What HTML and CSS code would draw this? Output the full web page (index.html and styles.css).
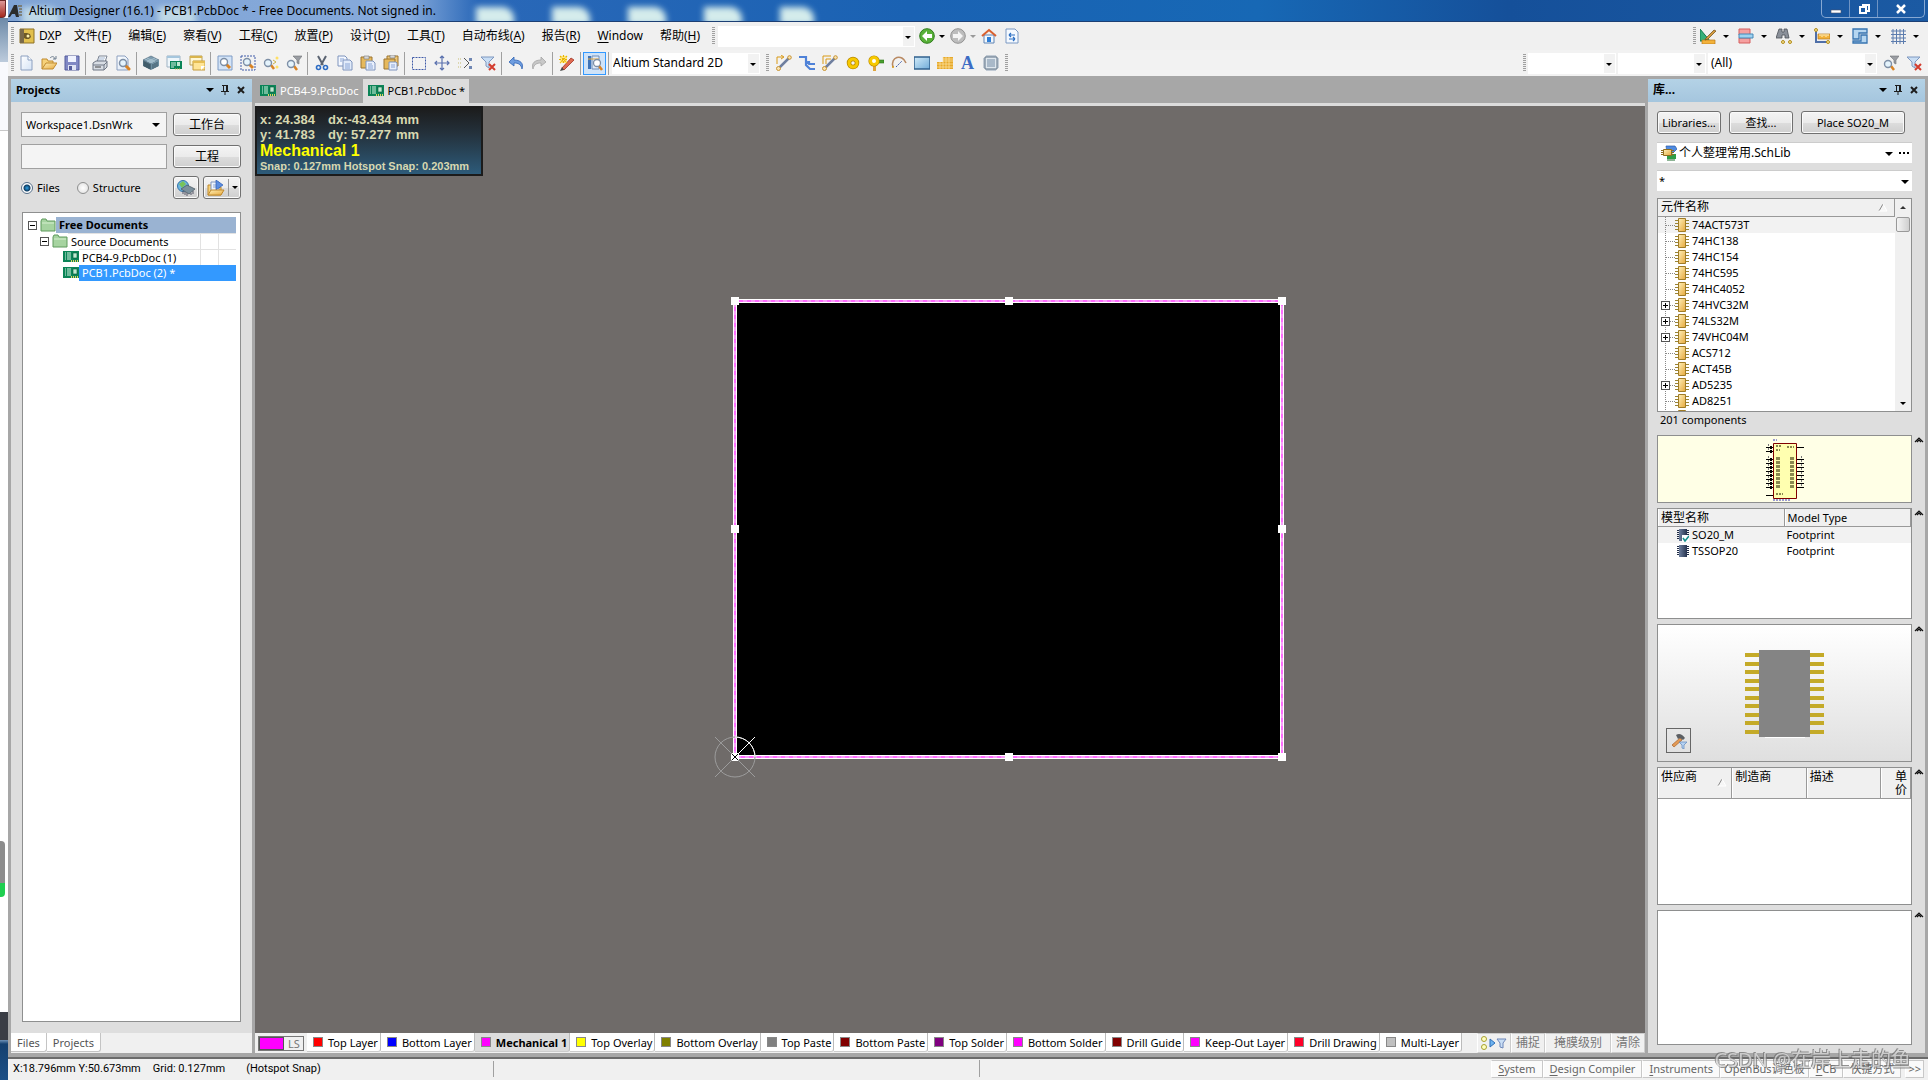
FILE: index.html
```html
<!DOCTYPE html>
<html lang="zh-CN">
<head>
  <meta charset="UTF-8">
  <title>Altium Designer (16.1)</title>
  <link rel="stylesheet" href="styles.css">
</head>
<body>

<!-- icon sprites -->
<svg class="sprites" width="0" height="0">
  <defs>
    <linearGradient id="gGold" x1="0" y1="0" x2="1" y2="1"><stop offset="0" stop-color="#fff0b8"/><stop offset="1" stop-color="#e6a83c"/></linearGradient>
    <linearGradient id="gSky" x1="0" y1="0" x2="1" y2="1"><stop offset="0" stop-color="#d3ecfa"/><stop offset="1" stop-color="#6fabd8"/></linearGradient>
    <linearGradient id="gPaper" x1="0" y1="0" x2="1" y2="1"><stop offset="0" stop-color="#ffffff"/><stop offset="1" stop-color="#d5e3f5"/></linearGradient>
    <linearGradient id="gDark" x1="0" y1="0" x2="1" y2="0"><stop offset="0" stop-color="#6d7f9e"/><stop offset="1" stop-color="#27344f"/></linearGradient>
  </defs>
  <symbol id="i-dxp" viewBox="0 0 16 16">
    <path d="M3 1h12v14H1V1z" fill="#e2c04e" stroke="#8d7124"/><path d="M1 1h4v14H1z" fill="#7a6a4a"/>
    <path d="M5 5h3l3 1 1 3-2 2H7L5 10z" fill="#6e5a26"/><circle cx="9" cy="8" r="1.5" fill="#fff3b0"/>
  </symbol>
  <symbol id="i-new" viewBox="0 0 16 16">
    <path d="M3 1h7l4 4v10H3z" fill="url(#gPaper)" stroke="#8ca0c0"/><path d="M10 1v4h4" fill="#fff" stroke="#8ca0c0"/>
  </symbol>
  <symbol id="i-open" viewBox="0 0 16 16">
    <path d="M1 14V4h5l1 2h5v3" fill="#f6d27a" stroke="#c08a2e"/><path d="M1 14l4-6h11l-4 6z" fill="url(#gGold)" stroke="#c08a2e"/>
    <path d="M9 3c2-2 4-2 5 1M12 4h3V1" fill="none" stroke="#6f7f8f"/>
  </symbol>
  <symbol id="i-save" viewBox="0 0 16 16">
    <path d="M1 1h14v14H1z" fill="#8088c4" stroke="#545c9c"/><path d="M4 1h8v6H4z" fill="#f0f3ff"/><path d="M4 10h8v5H4z" fill="#dfe3f4"/><path d="M5 11h3v4H5z" fill="#545c9c"/>
  </symbol>
  <symbol id="i-print" viewBox="0 0 16 16">
    <path d="M5 7l2-6h8l-2 6z" fill="#fff" stroke="#7c8594"/><path d="M7 3h6M6 5h6" stroke="#9fb3cf"/>
    <path d="M1 8l3-2h11v6l-3 3H1z" fill="#d8dde4" stroke="#6f7784"/><path d="M1 10h11l3-3M12 10v5" fill="none" stroke="#6f7784"/><path d="M3 12h6" stroke="#444"/>
  </symbol>
  <symbol id="i-preview" viewBox="0 0 16 16">
    <path d="M2 1h8l3 3v11H2z" fill="url(#gPaper)" stroke="#8ca0c0"/><path d="M11 11l3 3" stroke="#d98324" stroke-width="3" stroke-linecap="round"/><circle cx="8" cy="8" r="3.5" fill="#e4f3fc" stroke="#7d8fa6" stroke-width="1.5"/>
  </symbol>
  <symbol id="i-layers" viewBox="0 0 16 16">
    <path d="M0 5l8-4 8 4-8 4z" fill="#7d9caf" stroke="#4b6778" stroke-width=".6"/><path d="M4 3l8 4M2 4l8 4M4 7l8-4M6 8l8-4" stroke="#c3dae4" stroke-width=".6"/>
    <path d="M0 5v6l8 4V9z" fill="#4e6a7a"/><path d="M16 5v6l-8 4V9z" fill="#6d90a3"/><path d="M2 7v5M4 8v5M6 9v5M10 9v5M12 8v5M14 7v5" stroke="#2f4652" stroke-width=".7"/>
  </symbol>
  <symbol id="i-pcb" viewBox="0 0 16 16">
    <path d="M0 2h16v11H0z" fill="#0b8457"/><path d="M2 4h1M2 6h1M2 8h1M2 10h1M4 4h4M4 6h4M4 8h4M4 10h4" stroke="#d6f3e2"/>
    <path d="M10 4h4v5h-4z" fill="#bfe9d1" stroke="#045c3a" stroke-width=".6"/><path d="M8 12h7" stroke="#e0cf62" stroke-width="2" stroke-dasharray="1 1"/>
  </symbol>
  <symbol id="i-pcbwin" viewBox="0 0 16 16">
    <path d="M1 1h13v11H1z" fill="#eef6fb" stroke="#9fb3c4"/><path d="M1 1h13v2H1z" fill="#a5c6dd"/>
    <path d="M4 6h12v8H4z" fill="#0b8457"/><path d="M5 8h5M5 10h5M5 12h3" stroke="#d6f3e2"/><path d="M11 7h3v4h-3z" fill="#bfe9d1"/><path d="M9 14h6" stroke="#d9c24b" stroke-dasharray="1 1"/>
  </symbol>
  <symbol id="i-sheets" viewBox="0 0 16 16">
    <path d="M1 1h12v9H1z" fill="#fff7d4" stroke="#b9a05a"/><path d="M1 1h12v2H1z" fill="#d9b44c"/><path d="M4 6h12v9H4z" fill="#ffe596" stroke="#c39a3a"/><path d="M4 6h12v2H4z" fill="#e5bd52"/><path d="M12 15l4-4h-4z" fill="#fff"/>
  </symbol>
  <symbol id="i-zdoc" viewBox="0 0 16 16">
    <path d="M1 1h14v14H1z" fill="#d4e4f7" stroke="#7e9cc6"/><path d="M9 9l4 4" stroke="#d98324" stroke-width="3"/><circle cx="7" cy="7" r="3.5" fill="#fff" stroke="#7d8fa6" stroke-width="1.4"/>
  </symbol>
  <symbol id="i-zarea" viewBox="0 0 16 16">
    <path d="M1 1h14v14H1z" fill="none" stroke="#3f5aa8" stroke-dasharray="2 1"/><path d="M9 9l4 4" stroke="#d98324" stroke-width="3"/><circle cx="7" cy="7" r="3.5" fill="#e4f3fc" stroke="#7d8fa6" stroke-width="1.4"/>
  </symbol>
  <symbol id="i-zsel" viewBox="0 0 16 16">
    <path d="M8 10l3 4" stroke="#d98324" stroke-width="2.5"/><circle cx="5" cy="8" r="3.5" fill="#e4f3fc" stroke="#7d8fa6" stroke-width="1.4"/>
    <circle cx="14" cy="3" r="1.5" fill="#ffe066"/><circle cx="14" cy="12" r="1.5" fill="#ffe066"/><path d="M10 5l3 2-3 2" fill="none" stroke="#cbb34a"/>
  </symbol>
  <symbol id="i-zfilter" viewBox="0 0 16 16">
    <path d="M7 1h9l-3 4v4l-2-1V5z" fill="#9a9da3" stroke="#6f7276" stroke-width=".6"/><path d="M8 11l3 4" stroke="#d98324" stroke-width="2.5"/><circle cx="5" cy="9" r="3.5" fill="#e4f3fc" stroke="#7d8fa6" stroke-width="1.4"/>
  </symbol>
  <symbol id="i-cut" viewBox="0 0 16 16">
    <path d="M4 1l5 9M12 1L7 10" stroke="#5b6472" stroke-width="2"/><circle cx="4.500" cy="12.500" r="2" fill="none" stroke="#2c6cc4" stroke-width="1.600"/><circle cx="11.500" cy="12.500" r="2" fill="none" stroke="#2c6cc4" stroke-width="1.600"/>
  </symbol>
  <symbol id="i-copy" viewBox="0 0 16 16">
    <path d="M1 1h7l2 2v8H1z" fill="#f4f8ff" stroke="#7e94bd"/><path d="M6 5h7l2 2v8H6z" fill="#e1ebfa" stroke="#7e94bd"/><path d="M3 4h4M3 6h2M8 9h5M8 11h5M8 13h5" stroke="#8aa5d6"/>
  </symbol>
  <symbol id="i-paste" viewBox="0 0 16 16">
    <path d="M1 2h11v11H1z" fill="#e6b95c" stroke="#9c7430"/><path d="M4 1h5v3H4z" fill="#d8d8d8" stroke="#777" stroke-width=".6"/><path d="M6 6h7l2 2v7H6z" fill="#e9f0fc" stroke="#7e94bd"/><path d="M8 9h4M8 11h5M8 13h5" stroke="#8aa5d6"/>
  </symbol>
  <symbol id="i-paste2" viewBox="0 0 16 16">
    <path d="M4 1h11v10H4z" fill="#efc877" stroke="#9c7430"/><path d="M1 4h11v10H1z" fill="#e6b95c" stroke="#9c7430"/><path d="M7 0h5v3H7z" fill="#d8d8d8" stroke="#777" stroke-width=".6"/><path d="M6 7h7l1 1v7H6z" fill="#e9f0fc" stroke="#7e94bd"/><path d="M8 10h4M8 12h4" stroke="#8aa5d6"/>
  </symbol>
  <symbol id="i-marquee" viewBox="0 0 16 16"><path d="M1.500 2.500h13v12h-13z" fill="none" stroke="#3f5aa8" stroke-dasharray="2 1"/></symbol>
  <symbol id="i-move" viewBox="0 0 16 16"><path d="M8 1v14M1 8h14M6 3l2-2 2 2M6 13l2 2 2-2M3 6L1 8l2 2M13 6l2 2-2 2" fill="none" stroke="#5a71ae" stroke-width="1.2"/></symbol>
  <symbol id="i-desel" viewBox="0 0 16 16"><path d="M7 3l5 5-5 5" fill="none" stroke="#555"/><path d="M1 4h4M1 8h4M1 12h4" stroke="#c5ba6e" stroke-dasharray="1 1"/><path d="M12 3h3v3h-3zM12 11h3v3h-3z" fill="#6f86b3"/></symbol>
  <symbol id="i-clear" viewBox="0 0 16 16"><path d="M1 2h13L9 7v6l-3-2V7z" fill="#c9def5" stroke="#7f98c0"/><path d="M9 9l6 6M15 9l-6 6" stroke="#d33c2e" stroke-width="2"/></symbol>
  <symbol id="i-undo" viewBox="0 0 16 16"><path d="M6 2L1 7l5 4V8c4 0 7 1 8 6 2-6-2-9-8-9z" fill="#6e9de0" stroke="#2f62b3" stroke-width=".8"/></symbol>
  <symbol id="i-redo" viewBox="0 0 16 16"><path d="M10 2l5 5-5 4V8c-4 0-7 1-8 6-2-6 2-9 8-9z" fill="#c8c8c8" stroke="#a3a3a3" stroke-width=".8"/></symbol>
  <symbol id="i-wand" viewBox="0 0 16 16"><path d="M3 13L12 3l3 2L5 15z" fill="#e06a52" stroke="#9f3524" stroke-width=".8"/><path d="M1 16l2-4 2 3z" fill="#444"/><path d="M1 1h7v7H1z" fill="#ffe98a"/><path d="M4.500 0v9M0 4.500h9M1 1l7 7M8 1L1 8" stroke="#e8b400" stroke-width="1.200" stroke-dasharray="2 1"/></symbol>
  <symbol id="i-browse" viewBox="0 0 16 16"><path d="M1 1h3v13H1z" fill="#3f74b8"/><path d="M5 1h7v13H5z" fill="#dfeaf7" stroke="#6e8db8"/><path d="M1 4h11" stroke="#e7a93b"/><path d="M12 11l3 4" stroke="#d98324" stroke-width="2.500"/><circle cx="10" cy="8" r="3.500" fill="#fff" stroke="#7d8fa6" stroke-width="1.300"/></symbol>
  <symbol id="i-route" viewBox="0 0 16 16"><path d="M3 13L13 3" stroke="#6f7f9f" stroke-width="2.500"/><circle cx="2.500" cy="13.500" r="2" fill="#f7e3b5" stroke="#c89330"/><circle cx="13.500" cy="2.500" r="1.800" fill="#f7e3b5" stroke="#c89330"/><path d="M1 9V2h6M5 0l3 2-3 2" fill="none" stroke="#d99a16"/></symbol>
  <symbol id="i-diff" viewBox="0 0 16 16"><path d="M0 2h7v4l3 3h6M7 6v4l4 4h5M10 6v3" fill="none" stroke="#4f82d8" stroke-width="2.200"/></symbol>
  <symbol id="i-multi" viewBox="0 0 16 16"><path d="M3 13L13 3" stroke="#6f7f9f" stroke-width="2.500"/><circle cx="2.500" cy="13.500" r="2" fill="#f7e3b5" stroke="#c89330"/><circle cx="13.500" cy="2.500" r="1.800" fill="#f7e3b5" stroke="#c89330"/><path d="M1 9V1h8M4 9V4h5" fill="none" stroke="#d99a16"/></symbol>
  <symbol id="i-pad" viewBox="0 0 16 16"><circle cx="8" cy="8" r="4" fill="none" stroke="#b98a00" stroke-width="4.500"/><circle cx="8" cy="8" r="4" fill="none" stroke="#f7c900" stroke-width="3"/></symbol>
  <symbol id="i-via" viewBox="0 0 16 16"><path d="M8 5h8v3H8z" fill="#49a02f" stroke="#2f7418" stroke-width=".6"/><path d="M5 8h3v8H5z" fill="#e0a53c"/><circle cx="6" cy="6" r="3.500" fill="none" stroke="#b98a00" stroke-width="4.200"/><circle cx="6" cy="6" r="3.500" fill="#fff" stroke="#f7c900" stroke-width="3"/></symbol>
  <symbol id="i-arc" viewBox="0 0 16 16"><path d="M2 12C-1 2 11-2 15 8" fill="none" stroke="#b98a63" stroke-width="1.600"/><path d="M5 12l6-6" stroke="#3f5aa8" stroke-dasharray="2 1"/><circle cx="2" cy="12" r="1" fill="#d99a16"/></symbol>
  <symbol id="i-fill" viewBox="0 0 16 16"><path d="M0 2h16v12H0z" fill="url(#gSky)" stroke="#31618f" stroke-width="1.500"/></symbol>
  <symbol id="i-poly" viewBox="0 0 16 16"><path d="M6 2h10v12H0V7h6z" fill="#e6a92c"/><path d="M0 9h16M0 12h16M6 6h10M6 4h10M3 7v7M6 2v12M9 2v12M12 2v12" stroke="#ffe7a6" stroke-width=".7"/></symbol>
  <symbol id="i-chip" viewBox="0 0 16 16"><path d="M4 0v16M6 0v16M8 0v16M10 0v16M12 0v16M0 4h16M0 6h16M0 8h16M0 10h16M0 12h16" stroke="#7890a8" stroke-width=".8"/><path d="M2 2h12v12H2z" fill="#dfe7ee" stroke="#5f7286"/><path d="M4 4h8v8H4z" fill="#a9b9c9"/></symbol>
  <symbol id="i-back" viewBox="0 0 16 16"><circle cx="8" cy="8" r="7.300" fill="#58b038" stroke="#2f7d1c"/><path d="M8 3L3 8l5 5v-3h5V6H8z" fill="#fff"/></symbol>
  <symbol id="i-fwd" viewBox="0 0 16 16"><circle cx="8" cy="8" r="7.300" fill="#bdbdbd" stroke="#929292"/><path d="M8 3l5 5-5 5v-3H3V6h5z" fill="#f5f5f5"/></symbol>
  <symbol id="i-home" viewBox="0 0 16 16"><path d="M3 7h10v8H3z" fill="#f2f7fc" stroke="#5f84b5"/><path d="M6 9h4v5H6z" fill="#2f7ed6"/><path d="M1 8l7-6 7 6" fill="none" stroke="#d9602f" stroke-width="2"/></symbol>
  <symbol id="i-sync" viewBox="0 0 16 16"><path d="M2 1h9l3 3v11H2z" fill="#f4f9ff" stroke="#7a98c2"/><path d="M5 7h6M5 7l2-2M5 7l2 2M11 11H5M11 11L9 9M11 11l-2 2" stroke="#2a6fc4" stroke-width="1.200" fill="none"/></symbol>
  <symbol id="i-ruler" viewBox="0 0 16 16"><path d="M0 1v12h10z" fill="#35b07a" stroke="#0f7a4e"/><path d="M2 12h13v4H2z" fill="#f3b23a" stroke="#b97a1c" stroke-width=".7"/><path d="M6 10l8-8 2 1-8 8-3 1z" fill="#d39a3f" stroke="#6d4a16" stroke-width=".7"/></symbol>
  <symbol id="i-align" viewBox="0 0 16 16"><path d="M1 1h11v6H1zM1 10h11v5H1z" fill="#f6a0a0" stroke="#d45e5e"/><path d="M1 6h14v4H1z" fill="#9fd2f0" stroke="#4789b8"/></symbol>
  <symbol id="i-bino" viewBox="0 0 16 16"><path d="M3 1h3v3h2V1h3l2 9H9V7H6v3H0z" fill="#8a9099" stroke="#4d5259" stroke-width=".8"/><circle cx="7" cy="14" r="1.500" fill="#f7e08a" stroke="#b08b1d"/><circle cx="14" cy="14" r="1.500" fill="#f7e08a" stroke="#b08b1d"/></symbol>
  <symbol id="i-dim" viewBox="0 0 16 16"><path d="M2 3v11h12" fill="none" stroke="#4f6fa8" stroke-width="2"/><path d="M4 6h12v5H4z" fill="#f3b23a" stroke="#b97a1c" stroke-width=".7"/><path d="M6 6v2M8 6v3M10 6v2M12 6v3M14 6v2" stroke="#fff3c9"/><circle cx="2" cy="2" r="1.500" fill="#f7e08a" stroke="#b08b1d"/><circle cx="14" cy="14" r="1.500" fill="#f7e08a" stroke="#b08b1d"/></symbol>
  <symbol id="i-room" viewBox="0 0 16 16"><path d="M1 1h14v4H7v6H1zM15 7v8H1v-2h8V7z" fill="#b6d6f0" stroke="#3673b0" stroke-width="1.300"/></symbol>
  <symbol id="i-grid" viewBox="0 0 16 16"><path d="M3 1v15M6.500 1v15M10 1v15M13.500 1v15M1 3h15M1 6.500h15M1 10h15M1 13.500h15" stroke="#5c7cae"/></symbol>
  <symbol id="i-pin" viewBox="0 0 10 12"><path d="M2 1.500h6M3.500 1v6M6.500 1v6M7.500 1v6M1 7.500h8M5 7v4" stroke="#1d1d1d" fill="none"/></symbol>
  <symbol id="i-x" viewBox="0 0 10 12"><path d="M2 3l6 6M8 3L2 9" stroke="#1d1d1d" stroke-width="2"/></symbol>
  <symbol id="i-sort" viewBox="0 0 10 8"><path d="M5 0l4 7H1z" fill="#f6f6f6"/><path d="M5 0L1 7" stroke="#888"/><path d="M5 0l4 7H1" fill="none" stroke="#fff"/></symbol>
  <symbol id="i-folder" viewBox="0 0 16 14"><path d="M1 3l1-2h4l1 2h8v10H1z" fill="#a6d3a0" stroke="#5e9a5c"/><path d="M2 5h12" stroke="#d5efcf"/></symbol>
  <symbol id="i-comp" viewBox="0 0 14 16"><path d="M0 3.500h14M0 6.500h14M0 9.500h14M0 12.500h14" stroke="#9a8434"/><path d="M3.500 1.500h7v13h-7z" fill="url(#gGold)" stroke="#a07c26"/></symbol>
  <symbol id="i-foot" viewBox="0 0 12 14"><path d="M0 2.500h12M0 4.500h12M0 6.500h12M0 8.500h12M0 10.500h12" stroke="#1f2b45"/><path d="M2 1h8v12H2z" fill="url(#gDark)"/></symbol>
  <symbol id="i-caret" viewBox="0 0 10 6"><path d="M1 5l4-4 4 4M3 5l2-2 2 2" fill="none" stroke="#111" stroke-width="1.200"/></symbol>
  <symbol id="i-globe" viewBox="0 0 18 16"><circle cx="6" cy="6" r="5.500" fill="#6db4e0" stroke="#3474a8"/><path d="M2 4l4-3 3 3-4 4z" fill="#77c35a"/><path d="M4 9l6-4 8 4-6 5z" fill="#7b909d" stroke="#45545d" stroke-width=".7"/><path d="M6 11v3M8 12v3M10 13v3M14 13v2M16 11v3" stroke="#556"/></symbol>
  <symbol id="i-openprj" viewBox="0 0 18 16"><path d="M1 15V5h4l1 2h8v8z" fill="#f6d27a" stroke="#c08a2e"/><path d="M4 2h8v9H4z" fill="#eef4fd" stroke="#7e94bd"/><path d="M6 5h4M6 7h4" stroke="#8aa5d6"/><path d="M9 0l7 5-7 5z" fill="#5b8de0" stroke="#2c5cb3" stroke-width=".7"/><path d="M1 15l3-5h13l-3 5z" fill="url(#gGold)" stroke="#c08a2e"/></symbol>
  <symbol id="i-lib" viewBox="0 0 16 16"><path d="M5 1h9l2 3-4 4H6z" fill="#4f8ae0" stroke="#2a5aa8" stroke-width=".7"/><path d="M6 9h9v5H6z" fill="#2f9e46"/><path d="M7 14v2M9 14v2M11 14v2M13 14v2" stroke="#1c6a2c"/><path d="M0 5.500h13M0 7.500h13M0 9.500h13" stroke="#8f6d1f"/><path d="M2.500 4.500h8v6h-8z" fill="url(#gGold)" stroke="#8f6d1f"/></symbol>
  <symbol id="i-hammer" viewBox="0 0 16 16"><path d="M1 12L9 5l2 2-8 7z" fill="#e39a56" stroke="#a8632a" stroke-width=".7"/><path d="M5 2c3-2 6-1 9 3l-2 2-3-2-2 1z" fill="#5c5f63"/><path d="M8 9h8l-3 3v4l-2-1v-3z" fill="#b5d2f2" stroke="#5f86ba" stroke-width=".7"/></symbol>
</svg>

<div class="screen">
  <!-- slice of the desktop behind the window -->
  <div class="desktop-edge">
    <i class="edge-red"></i><i class="edge-glass"></i><i class="edge-top"></i><i class="edge-page"></i><i class="edge-green"></i><i class="edge-page2"></i><i class="edge-dark"></i><i class="edge-task"></i>
  </div>

  <div class="window">
    <header class="titlebar">
      <i class="blob b1"></i><i class="blob b2"></i><i class="blob b3"></i><i class="blob b4"></i><i class="blob b5"></i><i class="blob b6"></i><i class="blob b7"></i>
      <svg class="logo" viewBox="0 0 16 16"><path d="M0 14L6 2h3l2 12H8l-1-3H4l-2 3z" fill="#2b2b2b"/><path d="M10 3h4M11 6h3M11 9h3M11 12h3" stroke="#77705a" stroke-width="1.500"/></svg>
      <h1>Altium Designer (16.1) - PCB1.PcbDoc * - Free Documents. Not signed in.</h1>
      <div class="win-buttons">
        <button aria-label="Minimize"><svg width="12" height="12" viewBox="0 0 12 12"><path d="M1 7h10v3H1z" fill="#fff" stroke="#47526b" stroke-width=".6"/></svg></button>
        <button aria-label="Restore"><svg width="12" height="12" viewBox="0 0 12 12"><path d="M4 2h7v6H9M2 4h6v6H2z" fill="none" stroke="#fff" stroke-width="2"/></svg></button>
        <button class="wide" aria-label="Close"><svg width="12" height="12" viewBox="0 0 12 12"><path d="M2 2l8 8M10 2l-8 8" stroke="#fff" stroke-width="2.500"/></svg></button>
      </div>
    </header>

    <nav class="menubar">
      <i class="grip"></i>
      <a class="menu dxp" href="#"><svg class="ic"><use href="#i-dxp"/></svg><span>D<u>X</u>P</span></a>
      <a class="menu" href="#">文件(<u>F</u>)</a>
      <a class="menu" href="#">编辑(<u>E</u>)</a>
      <a class="menu" href="#">察看(<u>V</u>)</a>
      <a class="menu" href="#">工程(<u>C</u>)</a>
      <a class="menu" href="#">放置(<u>P</u>)</a>
      <a class="menu" href="#">设计(<u>D</u>)</a>
      <a class="menu" href="#">工具(<u>T</u>)</a>
      <a class="menu" href="#">自动布线(<u>A</u>)</a>
      <a class="menu" href="#">报告(<u>R</u>)</a>
      <a class="menu" href="#"><u>W</u>indow</a>
      <a class="menu" href="#">帮助(<u>H</u>)</a>
      <i class="grip"></i>
      <span class="drop w-address"><select aria-label="Address"><option></option></select></span>
      <button class="tool" aria-label="Back"><svg class="ic"><use href="#i-back"/></svg></button><i class="arr"></i>
      <button class="tool" aria-label="Forward"><svg class="ic"><use href="#i-fwd"/></svg></button><i class="arr dim"></i>
      <button class="tool" aria-label="Home"><svg class="ic"><use href="#i-home"/></svg></button>
      <button class="tool" aria-label="Refresh"><svg class="ic"><use href="#i-sync"/></svg></button>
      <div class="right utilities">
        <i class="grip"></i>
        <button class="tool" aria-label="Utilities"><svg class="ic"><use href="#i-ruler"/></svg></button><i class="arr"></i>
        <button class="tool" aria-label="Align"><svg class="ic"><use href="#i-align"/></svg></button><i class="arr"></i>
        <button class="tool" aria-label="Find"><svg class="ic"><use href="#i-bino"/></svg></button><i class="arr"></i>
        <button class="tool" aria-label="Dimension"><svg class="ic"><use href="#i-dim"/></svg></button><i class="arr"></i>
        <button class="tool" aria-label="Room"><svg class="ic"><use href="#i-room"/></svg></button><i class="arr"></i>
        <button class="tool" aria-label="Grid"><svg class="ic"><use href="#i-grid"/></svg></button><i class="arr"></i>
      </div>
    </nav>

    <div class="toolbar">
      <i class="grip"></i>
      <button class="tool" aria-label="New"><svg class="ic"><use href="#i-new"/></svg></button>
      <button class="tool" aria-label="Open"><svg class="ic"><use href="#i-open"/></svg></button>
      <button class="tool" aria-label="Save"><svg class="ic"><use href="#i-save"/></svg></button>
      <i class="sep"></i>
      <button class="tool" aria-label="Print"><svg class="ic"><use href="#i-print"/></svg></button>
      <button class="tool" aria-label="Print preview"><svg class="ic"><use href="#i-preview"/></svg></button>
      <i class="sep"></i>
      <button class="tool" aria-label="Layers"><svg class="ic"><use href="#i-layers"/></svg></button>
      <button class="tool" aria-label="PCB panel"><svg class="ic"><use href="#i-pcbwin"/></svg></button>
      <button class="tool" aria-label="Sheets"><svg class="ic"><use href="#i-sheets"/></svg></button>
      <i class="sep"></i>
      <button class="tool" aria-label="Fit document"><svg class="ic"><use href="#i-zdoc"/></svg></button>
      <button class="tool" aria-label="Zoom area"><svg class="ic"><use href="#i-zarea"/></svg></button>
      <button class="tool" aria-label="Zoom selected"><svg class="ic"><use href="#i-zsel"/></svg></button>
      <button class="tool" aria-label="Zoom filtered"><svg class="ic"><use href="#i-zfilter"/></svg></button>
      <i class="sep"></i>
      <button class="tool" aria-label="Cut"><svg class="ic"><use href="#i-cut"/></svg></button>
      <button class="tool" aria-label="Copy"><svg class="ic"><use href="#i-copy"/></svg></button>
      <button class="tool" aria-label="Paste"><svg class="ic"><use href="#i-paste"/></svg></button>
      <button class="tool" aria-label="Rubber stamp"><svg class="ic"><use href="#i-paste2"/></svg></button>
      <i class="sep"></i>
      <button class="tool" aria-label="Select area"><svg class="ic"><use href="#i-marquee"/></svg></button>
      <button class="tool" aria-label="Move"><svg class="ic"><use href="#i-move"/></svg></button>
      <button class="tool" aria-label="Deselect"><svg class="ic"><use href="#i-desel"/></svg></button>
      <button class="tool" aria-label="Clear filter"><svg class="ic"><use href="#i-clear"/></svg></button>
      <i class="sep"></i>
      <button class="tool" aria-label="Undo"><svg class="ic"><use href="#i-undo"/></svg></button>
      <button class="tool" aria-label="Redo"><svg class="ic"><use href="#i-redo"/></svg></button>
      <i class="sep"></i>
      <button class="tool" aria-label="Cross probe"><svg class="ic"><use href="#i-wand"/></svg></button>
      <i class="sep"></i>
      <button class="tool on" aria-label="Browse"><svg class="ic"><use href="#i-browse"/></svg></button>
      <i class="sep"></i>
      <span class="drop w-view"><select aria-label="View"><option>Altium Standard 2D</option></select></span>
      <i class="grip"></i>
      <button class="tool" aria-label="Route"><svg class="ic"><use href="#i-route"/></svg></button>
      <button class="tool" aria-label="Differential pair"><svg class="ic"><use href="#i-diff"/></svg></button>
      <button class="tool" aria-label="Multiple traces"><svg class="ic"><use href="#i-multi"/></svg></button>
      <button class="tool" aria-label="Pad"><svg class="ic"><use href="#i-pad"/></svg></button>
      <button class="tool" aria-label="Via"><svg class="ic"><use href="#i-via"/></svg></button>
      <button class="tool" aria-label="Arc"><svg class="ic"><use href="#i-arc"/></svg></button>
      <button class="tool" aria-label="Fill"><svg class="ic"><use href="#i-fill"/></svg></button>
      <button class="tool" aria-label="Polygon"><svg class="ic"><use href="#i-poly"/></svg></button>
      <button class="tool letter">A</button>
      <button class="tool" aria-label="Component"><svg class="ic"><use href="#i-chip"/></svg></button>
      <i class="grip"></i>
      <div class="right filters">
        <i class="grip"></i>
        <span class="drop w-net"><select aria-label="Net"><option></option></select></span>
        <span class="drop w-net"><select aria-label="Component"><option></option></select></span>
        <span class="drop w-all"><select aria-label="Filter"><option>(All)</option></select></span>
        <div class="pair">
          <button class="tool" aria-label="Zoom filtered"><svg class="ic"><use href="#i-zfilter"/></svg></button>
          <button class="tool" aria-label="Clear filter"><svg class="ic"><use href="#i-clear"/></svg></button>
        </div>
      </div>
    </div>

    <main class="work">
      <aside class="panel projects">
        <div class="panel-head"><h2>Projects</h2><i class="arr"></i><svg class="ph"><use href="#i-pin"/></svg><svg class="ph"><use href="#i-x"/></svg></div>
        <div class="proj-form">
          <span class="drop boxed"><select aria-label="Workspace"><option>Workspace1.DsnWrk</option></select></span>
          <button class="btn">工作台</button>
          <input class="boxed" type="text" aria-label="Project">
          <button class="btn">工程</button>
          <div class="radios">
            <label><input type="radio" name="view" checked>Files</label>
            <label><input type="radio" name="view">Structure</label>
          </div>
          <div class="mini">
            <button class="btn" aria-label="Compile"><svg width="18" height="16"><use href="#i-globe"/></svg></button>
            <button class="btn split" aria-label="Open project"><svg width="18" height="16"><use href="#i-openprj"/></svg><i class="bar"></i><i class="arr"></i></button>
          </div>
        </div>
        <ul class="tree">
          <li class="root"><i class="pm minus"></i><svg width="16" height="14"><use href="#i-folder"/></svg><span>Free Documents</span></li>
          <li class="lv1 cells"><i class="pm minus"></i><svg width="16" height="14"><use href="#i-folder"/></svg><span>Source Documents</span></li>
          <li class="lv2 cells"><svg width="16" height="16"><use href="#i-pcb"/></svg><span>PCB4-9.PcbDoc (1)</span></li>
          <li class="lv2 active"><svg width="16" height="16"><use href="#i-pcb"/></svg><span>PCB1.PcbDoc (2) *</span></li>
        </ul>
        <div class="panel-tabs"><a href="#">Files</a><a href="#">Projects</a></div>
      </aside>

      <section class="editor">
        <div class="doc-tabs">
          <a href="#"><svg width="16" height="16"><use href="#i-pcb"/></svg>PCB4-9.PcbDoc</a>
          <a href="#" class="current"><svg width="16" height="16"><use href="#i-pcb"/></svg>PCB1.PcbDoc *</a>
        </div>
        <div class="canvas">
          <div class="hud">
            <p><span>x: 24.384</span><span>dx:-43.434</span>mm</p>
            <p><span>y: 41.783</span><span>dy: 57.277</span>mm</p>
            <p class="layer">Mechanical 1</p>
            <p class="snap">Snap: 0.127mm Hotspot Snap: 0.203mm</p>
          </div>
          <svg class="board" width="580" height="500" viewBox="0 0 580 500">
            <path d="M24 14h547v456H24z" fill="#000" stroke="#fff" stroke-width="4"/>
            <path d="M24 14h547v456H24z" fill="none" stroke="#ff6cff" stroke-width="2"/>
            <path d="M24 14h547v456H24z" fill="none" stroke="#f3d4f3" stroke-width="1" stroke-dasharray="4 4"/>
            <path d="M20 10h8v8h-8zM294 10h8v8h-8zM567 10h8v8h-8zM20 238h8v8h-8zM567 238h8v8h-8zM20 466h8v8h-8zM294 466h8v8h-8zM567 466h8v8h-8z" fill="#fff"/>
            <path d="M4 450l40 40M4 490l20-20" stroke="#9c9c9c"/>
            <circle cx="24" cy="470" r="20" fill="none" stroke="#9c9c9c"/>
            <path d="M24 450a20 20 0 0 1 20 20M24 470l20-20" fill="none" stroke="#fff"/>
            <path d="M21 467l6 6M27 467l-6 6" stroke="#000"/>
          </svg>
        </div>
        <div class="layer-tabs">
          <button class="ls"><i></i>LS</button>
          <a href="#"><i class="c-red"></i>Top Layer</a>
          <a href="#"><i class="c-blue"></i>Bottom Layer</a>
          <a href="#" class="current"><i class="c-magenta"></i>Mechanical 1</a>
          <a href="#"><i class="c-yellow"></i>Top Overlay</a>
          <a href="#"><i class="c-olive"></i>Bottom Overlay</a>
          <a href="#"><i class="c-gray"></i>Top Paste</a>
          <a href="#"><i class="c-maroon"></i>Bottom Paste</a>
          <a href="#"><i class="c-purple"></i>Top Solder</a>
          <a href="#"><i class="c-magenta"></i>Bottom Solder</a>
          <a href="#"><i class="c-maroon"></i>Drill Guide</a>
          <a href="#"><i class="c-magenta"></i>Keep-Out Layer</a>
          <a href="#"><i class="c-crimson"></i>Drill Drawing</a>
          <a href="#"><i class="c-silver"></i>Multi-Layer</a>
          <div class="mask">
            <button aria-label="Highlight"><svg width="28" height="16" viewBox="0 0 28 16"><circle cx="4" cy="4" r="2.500" fill="#ffffc0" stroke="#a8a030"/><circle cx="4" cy="12" r="2.500" fill="#ffffc0" stroke="#a8a030"/><path d="M10 4l5 4-5 4z" fill="#6fb4f0" stroke="#2f6fb8"/><path d="M17 4h9l-3 4v5l-3-1V8z" fill="#c9def5" stroke="#6d86b8"/></svg></button>
            <button>捕捉</button><button class="roomy">掩膜级别</button><button>清除</button>
          </div>
        </div>
      </section>

      <aside class="panel library">
        <div class="panel-head"><h2>库...</h2><i class="arr"></i><svg class="ph"><use href="#i-pin"/></svg><svg class="ph"><use href="#i-x"/></svg></div>
        <div class="lib-body">
          <div class="lib-buttons"><button class="btn">Libraries...</button><button class="btn">查找...</button><button class="btn place">Place SO20_M</button></div>
          <div class="lib-row"><svg width="16" height="16"><use href="#i-lib"/></svg><span class="drop"><select aria-label="Library"><option>个人整理常用.SchLib</option></select></span><button class="dots" aria-label="More"><i></i><i></i><i></i></button></div>
          <div class="lib-row"><span class="drop"><select aria-label="Mask"><option>*</option></select></span></div>

          <div class="comp-list">
            <div class="list-main">
              <div class="list-head">元件名称<svg class="sort"><use href="#i-sort"/></svg></div>
              <ul>
                <li class="hot"><svg width="14" height="16"><use href="#i-comp"/></svg>74ACT573T</li>
                <li><svg width="14" height="16"><use href="#i-comp"/></svg>74HC138</li>
                <li><svg width="14" height="16"><use href="#i-comp"/></svg>74HC154</li>
                <li><svg width="14" height="16"><use href="#i-comp"/></svg>74HC595</li>
                <li><svg width="14" height="16"><use href="#i-comp"/></svg>74HC4052</li>
                <li><i class="pm plus"></i><svg width="14" height="16"><use href="#i-comp"/></svg>74HVC32M</li>
                <li><i class="pm plus"></i><svg width="14" height="16"><use href="#i-comp"/></svg>74LS32M</li>
                <li><i class="pm plus"></i><svg width="14" height="16"><use href="#i-comp"/></svg>74VHC04M</li>
                <li><svg width="14" height="16"><use href="#i-comp"/></svg>ACS712</li>
                <li><svg width="14" height="16"><use href="#i-comp"/></svg>ACT45B</li>
                <li><i class="pm plus"></i><svg width="14" height="16"><use href="#i-comp"/></svg>AD5235</li>
                <li><svg width="14" height="16"><use href="#i-comp"/></svg>AD8251</li>
                <li><svg width="14" height="16"><use href="#i-comp"/></svg></li>
              </ul>
            </div>
            <div class="scroll"><i class="arr up"></i><i class="thumb"></i><i class="arr"></i></div>
          </div>
          <p class="count">201 components</p>

          <div class="fold symbol">
            <svg width="40" height="66" viewBox="0 0 40 66">
              <path d="M8.500 7.500h23v55h-23z" fill="#ffffb0" stroke="#800000"/>
              <path d="M1 11.500h7M1 15.500h7M1 23.500h7M1 27.500h7M1 31.500h7M1 35.500h7M1 39.500h7M1 43.500h7M1 47.500h7M1 51.500h7M1 59.500h7M32 11.500h7M32 23.500h7M32 27.500h7M32 31.500h7M32 35.500h7M32 39.500h7M32 43.500h7M32 47.500h7M32 51.500h7" stroke="#000"/>
              <path d="M6 10v7M6 22v31" stroke="#000" stroke-width="2" stroke-dasharray="3 1"/>
              <path d="M3.500 8v8M3.500 20v32M36.500 20v32" stroke="#777" stroke-dasharray="2 2"/>
              <path d="M13 21v32M27 21v32" stroke="#8a8850" stroke-width="4" stroke-dasharray="3 1"/>
              <path d="M11 10h6M22 11h7M11 14h4M11 58h7" stroke="#8a8850" stroke-width="2" stroke-dasharray="2 1"/>
              <path d="M8 4h4M8 64h18" stroke="#9a9ad0" stroke-width="2" stroke-dasharray="2 1"/>
            </svg>
            <svg class="caret"><use href="#i-caret"/></svg>
          </div>

          <div class="fold models">
            <table>
              <thead><tr><th>模型名称</th><th class="en">Model Type</th></tr></thead>
              <tbody>
                <tr class="hot"><td><svg width="12" height="14" viewBox="0 0 12 14"><use href="#i-foot"/><path d="M5 7h7v7H5z" fill="#fff"/><path d="M6 10l2 3 4-5" fill="none" stroke="#16908c" stroke-width="1.600"/></svg>SO20_M</td><td>Footprint</td></tr>
                <tr><td><svg width="12" height="14"><use href="#i-foot"/></svg>TSSOP20</td><td>Footprint</td></tr>
              </tbody>
            </table>
            <svg class="caret"><use href="#i-caret"/></svg>
          </div>

          <div class="fold solid">
            <svg width="79" height="90" viewBox="0 0 79 90">
              <path d="M20 87.500h40" stroke="#fff"/>
              <path d="M0 5h79M0 14h79M0 22h79M0 31h79M0 39h79M0 48h79M0 56h79M0 65h79M0 73h79M0 82h79" stroke="#c4aa28" stroke-width="4"/>
              <path d="M14 0h51v87H14z" fill="#848484"/>
            </svg>
            <button class="hammer" aria-label="Configure"><svg width="16" height="16"><use href="#i-hammer"/></svg></button>
            <svg class="caret"><use href="#i-caret"/></svg>
          </div>

          <div class="fold suppliers">
            <table>
              <thead><tr><th>供应商<svg class="sort"><use href="#i-sort"/></svg></th><th>制造商</th><th>描述</th><th class="price">单价</th></tr></thead>
            </table>
            <svg class="caret"><use href="#i-caret"/></svg>
          </div>

          <div class="fold blank"><svg class="caret"><use href="#i-caret"/></svg></div>
        </div>
      </aside>
    </main>

    <footer class="status">
      <div class="st-main"><span>X:18.796mm Y:50.673mm</span><span>Grid: 0.127mm</span><span class="snapmode">(Hotspot Snap)</span></div>
      <div class="st-mid"></div>
      <div class="st-links">
        <a href="#"><u>S</u>ystem</a><a href="#"><u>D</u>esign Compiler</a><a href="#"><u>I</u>nstruments</a><a href="#">OpenBus调色板</a><a href="#"><u>P</u>CB</a><a href="#">快捷方式</a><a href="#" class="more">&gt;&gt;</a>
      </div>
      <div class="watermark">CSDN @在岸上走的鱼</div>
    </footer>
  </div>
</div>

</body>
</html>
```
FILE: styles.css
```css
* {
  box-sizing: border-box;
}

body {
  margin: 0;
  background: #f0f0f0;
  color: #000;
  font: 11px/16px "Noto Sans", "Noto Sans CJK SC", sans-serif;
  overflow: hidden;
}

h1, h2, p, ul {
  margin: 0;
  padding: 0;
  list-style: none;
}

a {
  color: inherit;
  text-decoration: none;
}

button, select, input {
  font: inherit;
  color: inherit;
  margin: 0;
}

button {
  padding: 0;
  border: 0;
  background: none;
}

svg {
  display: block;
  flex: none;
}

.sprites {
  position: absolute;
}

.screen {
  display: flex;
  height: 100vh;
}

/* desktop seen at the left */
.desktop-edge {
  width: 8px;
  flex: none;
  display: flex;
  flex-direction: column;
  background: #fff;
}

.edge-red { height: 18px; width: 6px; background: linear-gradient(#d99, #a5281c); border: 1px solid #6d2a2a; border-left: 0; border-radius: 0 0 4px 0; }
.edge-glass { height: 44px; background: linear-gradient(#6d8aa8, #bccbdc); }
.edge-top { height: 69px; background: #f8f9fd; border-bottom: 1px solid #c8c8c8; }
.edge-page { flex: 1; background: #fff; }
.edge-green { height: 56px; width: 5px; background: linear-gradient(#8d8d8d 0 42px, #1fcf50 42px); border-radius: 0 4px 4px 0; }
.edge-page2 { height: 115px; background: #fff; }
.edge-dark { height: 28px; background: #3a3d45; }
.edge-task { height: 40px; background: linear-gradient(#6f93b8, #14406f 4px, #1c4f86); }

.window {
  flex: 1;
  min-width: 0;
  display: flex;
  flex-direction: column;
}

/* title bar */
.titlebar {
  position: relative;
  height: 22px;
  flex: none;
  display: flex;
  align-items: center;
  gap: 5px;
  overflow: hidden;
  border-bottom: 1px solid #1c3f74;
  background: linear-gradient(90deg, #7fa3d4, #86aadb 400px, #2a68b8 470px, #1a62b3 900px, #1768b5 1250px, #15509a 1500px, #1b5aa3);
}

.titlebar h1 {
  position: relative;
  font-size: 12px;
  font-weight: normal;
}

.logo {
  position: relative;
  width: 16px;
  height: 16px;
}

.blob {
  position: absolute;
  bottom: -4px;
  width: 38px;
  height: 18px;
  background: #e8fbf2;
  border-radius: 0 12px 0 0;
  filter: blur(3px);
  opacity: .9;
}

.b1 { left: 14px; opacity: .6; }
.b2 { left: 150px; opacity: .6; }
.b3 { left: 468px; }
.b4 { left: 544px; }
.b5 { left: 620px; }
.b6 { left: 696px; }
.b7 { left: 772px; width: 34px; }

.win-buttons {
  margin-left: auto;
  align-self: flex-start;
  display: flex;
  height: 18px;
  margin-right: 3px;
  border: 1px solid #86a8d3;
  border-top: 0;
  border-radius: 0 0 5px 5px;
}

.win-buttons button {
  width: 28px;
  display: flex;
  align-items: center;
  justify-content: center;
  border-right: 1px solid #6f94c4;
}

.win-buttons .wide {
  width: 46px;
  border: 0;
}

/* menu and tool bars */
.menubar, .toolbar {
  display: flex;
  align-items: center;
  flex: none;
  background: #f0f0f0;
  font-size: 12px;
}

.menubar { height: 28px; }
.toolbar { height: 26px; background: #f2f2f2; }

.grip {
  width: 3px;
  height: 18px;
  margin: 0 3px;
  flex: none;
  background: repeating-linear-gradient(#a0a0a0 0 1px, #f0f0f0 1px 2px);
}

.grip:first-child { margin-right: 0; }

.menu {
  padding: 0 9px 0 8px;
  white-space: nowrap;
}

.menu.dxp {
  display: flex;
  align-items: center;
  gap: 4px;
  padding: 0 4px 0 5px;
}

.menu u, .st-links u {
  text-underline-offset: 2px;
}

.ic {
  width: 16px;
  height: 16px;
}

.tool {
  width: 23px;
  height: 23px;
  flex: none;
  display: flex;
  align-items: center;
  justify-content: center;
}

.tool.on {
  border: 1px solid #3399ff;
  background: #cfe3f8;
}

.tool.letter {
  font: bold 18px/20px "Liberation Serif", serif;
  color: #3c6cc4;
}

.sep {
  width: 1px;
  height: 23px;
  margin: 0 2px;
  flex: none;
  background: #a0a0a0;
}

.arr {
  width: 0;
  height: 0;
  flex: none;
  border: 3px solid transparent;
  border-top-color: #000;
  border-bottom: 0;
}

.arr.dim { border-top-color: #999; }

.arr.up {
  border-top: 0;
  border-bottom: 3px solid #333;
}

.menubar > .arr { margin: 0 1px; }
.utilities { padding-right: 4px; }
.utilities .arr { margin: 0 5px 0 4px; }

.drop {
  position: relative;
  display: block;
  height: 21px;
  background: #fff;
}

.drop select {
  width: 100%;
  height: 100%;
  padding: 0 20px 0 2px;
  border: 0;
  background: none;
  appearance: none;
  border-radius: 0;
}

.drop::after {
  content: "";
  position: absolute;
  right: 3px;
  top: 9px;
  border: 3px solid transparent;
  border-top-color: #000;
  border-bottom: 0;
  pointer-events: none;
}

.menubar .drop, .toolbar .drop {
  background: linear-gradient(90deg, #fff calc(100% - 11px), #f2f2f2 0);
  border: 1px solid #fff;
}

.w-address { width: 197px; }
.w-view { width: 148px; margin: 0 3px 0 1px; }
.w-view select { padding-left: 0; }
.w-net { width: 88px; }
.w-all { width: 169px; }

.right {
  margin-left: auto;
  display: flex;
  align-items: center;
}

.filters {
  gap: 2px;
  padding-right: 3px;
}

.pair { display: flex; }

/* work area */
.work {
  flex: 1;
  min-height: 0;
  display: flex;
  gap: 3px;
  padding: 3px 3px 4px;
  background: #a7a7a7;
  border-bottom: 2px solid #6b6b6b;
}

.panel {
  flex: none;
  display: flex;
  flex-direction: column;
  background: #dedede;
}

.projects { width: 241px; }
.library { width: 277px; }

.panel-head {
  height: 23px;
  flex: none;
  display: flex;
  align-items: center;
  gap: 10px;
  padding: 0 6px 2px 5px;
  background: linear-gradient(#b4d2e6, #a5c6de);
}

.panel-head h2 {
  flex: 1;
  font-size: 11px;
  font-weight: bold;
}

.library h2 { font-size: 12px; }

.panel-head .arr {
  border-width: 4px 4px 0;
}

.ph {
  width: 10px;
  height: 12px;
  margin-left: -4px;
}

.btn {
  height: 23px;
  display: flex;
  align-items: center;
  justify-content: center;
  border: 1px solid #707070;
  border-radius: 3px;
  background: linear-gradient(#f4f4f4, #ebebeb 50%, #dddddd 50%, #cfcfcf);
  box-shadow: inset 0 0 0 1px #fafafa;
}

.proj-form {
  display: grid;
  grid-template-columns: 1fr 68px;
  gap: 7px 6px;
  align-items: center;
  padding: 10px 11px 0 10px;
}

.proj-form .btn { font-size: 12px; }

.boxed {
  width: 100%;
  height: 25px;
  border: 1px solid #a0a0a0;
  background: #f4f4f4;
}

.boxed.drop::after {
  top: 10px;
  right: 6px;
  border-width: 4px 4px 0;
}

.proj-form .boxed select { padding-left: 4px; }

.radios {
  display: flex;
  gap: 17px;
}

.radios label {
  display: flex;
  align-items: center;
  gap: 4px;
}

.radios input {
  width: 12px;
  height: 12px;
  appearance: none;
  border: 1px solid #8e8f8f;
  border-radius: 50%;
  background: radial-gradient(#fff, #ddd);
}

.radios input:checked {
  border-color: #57708a;
  background: radial-gradient(#2ea3e8, #0f3d63 3px, #fff 4px);
}

.mini {
  display: flex;
  gap: 4px;
}

.mini .btn { width: 26px; }

.mini .split {
  width: 38px;
  gap: 3px;
}

.bar {
  width: 1px;
  height: 17px;
  background: #999;
}

.tree {
  flex: 1;
  margin: 13px 11px 0;
  padding: 4px;
  border: 1px solid #8e8f8f;
  background: #fff;
}

.tree li {
  display: flex;
  align-items: center;
  gap: 3px;
  height: 16px;
  padding-left: 1px;
}

.tree li span {
  flex: 1;
  height: 16px;
  margin-left: -3px;
  padding-left: 3px;
  line-height: 15px;
}

.tree .lv1 { padding-left: 13px; }
.tree .lv2 { padding-left: 36px; }

.tree .root span {
  background: #9ab3d2;
  font-weight: bold;
}

.tree .active span {
  background: #3399ff;
  color: #fff;
}

.cells span {
  border-top: 1px solid #e2e2e2;
  background: linear-gradient(#e2e2e2, #e2e2e2) right 35px top / 1px 16px no-repeat, linear-gradient(#e2e2e2, #e2e2e2) right 17px top / 1px 16px no-repeat;
}

.pm {
  width: 9px;
  height: 9px;
  flex: none;
  border: 1px solid #555;
  background: linear-gradient(#000, #000) center / 5px 1px no-repeat, #fff;
}

.pm.plus {
  background: linear-gradient(#000, #000) center / 5px 1px no-repeat, linear-gradient(#000, #000) center / 1px 5px no-repeat, #fff;
}

.panel-tabs {
  display: flex;
  height: 20px;
  margin-top: 11px;
  background: #f0f0f0;
  color: #555;
}

.panel-tabs a {
  height: 19px;
  padding: 2px 6px 0;
  border: 1px solid #c4c4c4;
  border-left: 0;
  border-top: 0;
  border-radius: 0 0 3px 0;
  background: #fff;
}

/* editor */
.editor {
  flex: 1;
  min-width: 0;
  display: flex;
  flex-direction: column;
}

.doc-tabs {
  display: flex;
  height: 27px;
  flex: none;
  border-bottom: 3px solid #dcdcdc;
  color: #fff;
}

.doc-tabs a {
  display: flex;
  align-items: center;
  gap: 4px;
  padding: 0 4px 0 5px;
}

.doc-tabs .current {
  background: #dcdcdc;
  color: #000;
}

.canvas {
  position: relative;
  flex: 1;
  background: #6f6b69;
}

.hud {
  width: 228px;
  height: 70px;
  padding: 4px 3px 0;
  border: 2px solid #1b1b1b;
  background: linear-gradient(#1c1c1c, #24323d 40%, #2d5b7a);
  color: #d8d8b0;
  font: bold 13px/15px "Liberation Sans", sans-serif;
}

.hud p { display: flex; }
.hud span { width: 68px; }
.hud .layer { font-size: 16px; line-height: 17px; color: #ffff00; }
.hud .snap { font-size: 11px; }

.board {
  position: absolute;
  left: 456px;
  top: 181px;
}

.layer-tabs {
  display: flex;
  height: 20px;
  flex: none;
  background: #f0f0f0;
}

.layer-tabs > a {
  display: flex;
  gap: 5px;
  padding: 2px 2px 0 6px;
  height: 19px;
  border-right: 1px solid #bbb;
  border-bottom: 1px solid #ccc;
  border-radius: 0 0 3px 0;
  background: #fff;
  white-space: nowrap;
}

.layer-tabs > a.current {
  background: #dcdcdc;
  font-weight: bold;
}

.layer-tabs > a i {
  width: 10px;
  height: 10px;
  margin-top: 2px;
  border: 1px solid #888;
}

.ls {
  display: flex;
  width: 46px;
  height: 15px;
  margin: 3px 3px 0;
  border: 1px solid #777;
  color: #777;
  line-height: 14px;
}

.ls i {
  width: 25px;
  height: 13px;
  margin-right: 4px;
  border: 1px solid #555;
  background: #ff00ff;
}

.c-red { background: #ff0000; }
.c-blue { background: #0000ff; }
.c-magenta { background: #ff00ff; }
.c-yellow { background: #ffff00; }
.c-olive { background: #808000; }
.c-gray { background: #808080; }
.c-maroon { background: #800000; }
.c-purple { background: #800080; }
.c-crimson { background: #ff0028; }
.c-silver { background: #c0c0c0; }

.mask {
  display: flex;
  margin-left: auto;
  color: #777;
  font-size: 12px;
}

.mask button {
  padding: 0 4px;
  border: 1px solid #ccc;
  border-left-color: #fff;
}

.mask .roomy { padding: 0 8px; }
.mask button:first-child { padding: 0 2px; }

/* library panel */
.lib-body {
  flex: 1;
  min-height: 0;
  display: flex;
  flex-direction: column;
  padding: 9px 13px 8px 9px;
}

.lib-buttons {
  display: flex;
  gap: 8px;
}

.lib-buttons .btn { width: 64px; }
.lib-buttons .place { width: 104px; }

.lib-row {
  display: flex;
  align-items: center;
  height: 21px;
  margin-top: 7px;
  background: #fff;
  border-top: 1px solid #ccc;
}

.lib-buttons + .lib-row { margin-top: 8px; padding-left: 4px; font-size: 12px; }
.lib-row .drop { flex: 1; height: 19px; }
.lib-row .drop::after { border-width: 4px 4px 0; top: 8px; }

.dots {
  display: flex;
  justify-content: center;
  gap: 2px;
  width: 16px;
}

.dots i {
  width: 2px;
  height: 2px;
  background: #000;
}

.comp-list {
  display: flex;
  height: 214px;
  margin-top: 7px;
  border: 1px solid #8e8f8f;
  background: #fff;
}

.list-main {
  flex: 1;
  overflow: hidden;
}

.list-head {
  display: flex;
  height: 18px;
  padding-left: 3px;
  border-right: 1px solid #999;
  border-bottom: 1px solid #999;
  background: #f0f0f0;
  font-size: 12px;
}

.sort {
  width: 10px;
  height: 8px;
  margin: 5px 6px 0 auto;
}

.comp-list li {
  display: flex;
  align-items: center;
  gap: 3px;
  height: 16px;
  padding-left: 17px;
  background: repeating-linear-gradient(#888 0 1px, transparent 1px 2px) 7px 0 / 1px 16px no-repeat, repeating-linear-gradient(90deg, #888 0 1px, transparent 1px 2px) 8px 8px / 9px 1px no-repeat;
}

.comp-list .hot { background-color: #f2f2f2; }
.comp-list .pm { margin: 0 2px 0 -14px; }

.scroll {
  width: 16px;
  display: flex;
  flex-direction: column;
  align-items: center;
  padding: 7px 1px 6px;
  background: #f0f0f0;
}

.thumb {
  width: 14px;
  height: 15px;
  margin: 8px 0 auto;
  border: 1px solid #999;
  border-radius: 2px;
  background: linear-gradient(90deg, #f4f4f4, #cfcfcf);
}

.count {
  height: 23px;
  padding-left: 3px;
}

.fold {
  position: relative;
  flex: none;
  margin-bottom: 5px;
  border: 1px solid #8e8f8f;
  background: #fff;
}

.caret {
  position: absolute;
  top: 1px;
  right: -13px;
  width: 10px;
  height: 6px;
}

.symbol {
  display: flex;
  justify-content: center;
  height: 68px;
  background: #ffffe6;
}

.models { height: 111px; }

table {
  width: 100%;
  border-collapse: separate;
  border-spacing: 0;
  table-layout: fixed;
}

th {
  height: 18px;
  padding: 0 3px;
  border-bottom: 1px solid #999;
  background: #f0f0f0;
  box-shadow: 1px 0 0 #fff inset, -1px 0 0 #999 inset;
  font-size: 12px;
  font-weight: normal;
  line-height: 16px;
  text-align: left;
}

th.en { font-size: 11px; }

td {
  height: 16px;
  padding: 0 2px;
}

td svg {
  float: left;
  margin: 1px 3px 0 17px;
}

.hot td { background: #f2f2f2; }

.solid {
  display: flex;
  justify-content: center;
  height: 138px;
  padding-top: 25px;
  background: linear-gradient(#fff, #dfdfdf);
}

.hammer {
  position: absolute;
  left: 8px;
  bottom: 8px;
  width: 25px;
  height: 25px;
  display: flex;
  align-items: center;
  justify-content: center;
  border: 1px solid #666;
}

.suppliers { height: 138px; }

.suppliers th {
  height: 31px;
  line-height: 13px;
  vertical-align: top;
  padding-top: 2px;
}

.suppliers .sort { float: right; margin: 9px 2px 0 0; }

.suppliers .price {
  width: 30px;
  padding-left: 14px;
}

.blank {
  flex: 1;
  margin-bottom: 0;
}

/* status bar */
.status {
  position: relative;
  display: flex;
  height: 21px;
  flex: none;
  align-items: center;
  padding-bottom: 2px;
  background: #f0f0f0;
}

.st-main {
  display: flex;
  gap: 12px;
  width: 486px;
  padding-left: 5px;
  border-right: 1px solid #a0a0a0;
  font-family: Roboto, sans-serif;
}

.snapmode { margin-left: 9px; }

.st-mid {
  width: 486px;
  height: 17px;
  border-right: 1px solid #a0a0a0;
}

.st-links {
  display: flex;
  margin-left: auto;
  margin-right: 4px;
  color: #666;
}

.st-links a {
  height: 18px;
  padding: 0 6px;
  border: 1px solid #c8c8c8;
  border-left-color: #fff;
  background: #fafafa;
}

.st-links a:nth-child(4) { padding: 0 3px; }
.st-links .more { margin-left: 4px; padding: 0 2px; }

.watermark {
  position: absolute;
  right: 17px;
  bottom: 6px;
  color: #d5d5d5;
  font-size: 20px;
  line-height: 28px;
  text-shadow: 1px 1px 0 #777, -1px -1px 0 #777;
  opacity: .8;
  white-space: nowrap;
}
```
